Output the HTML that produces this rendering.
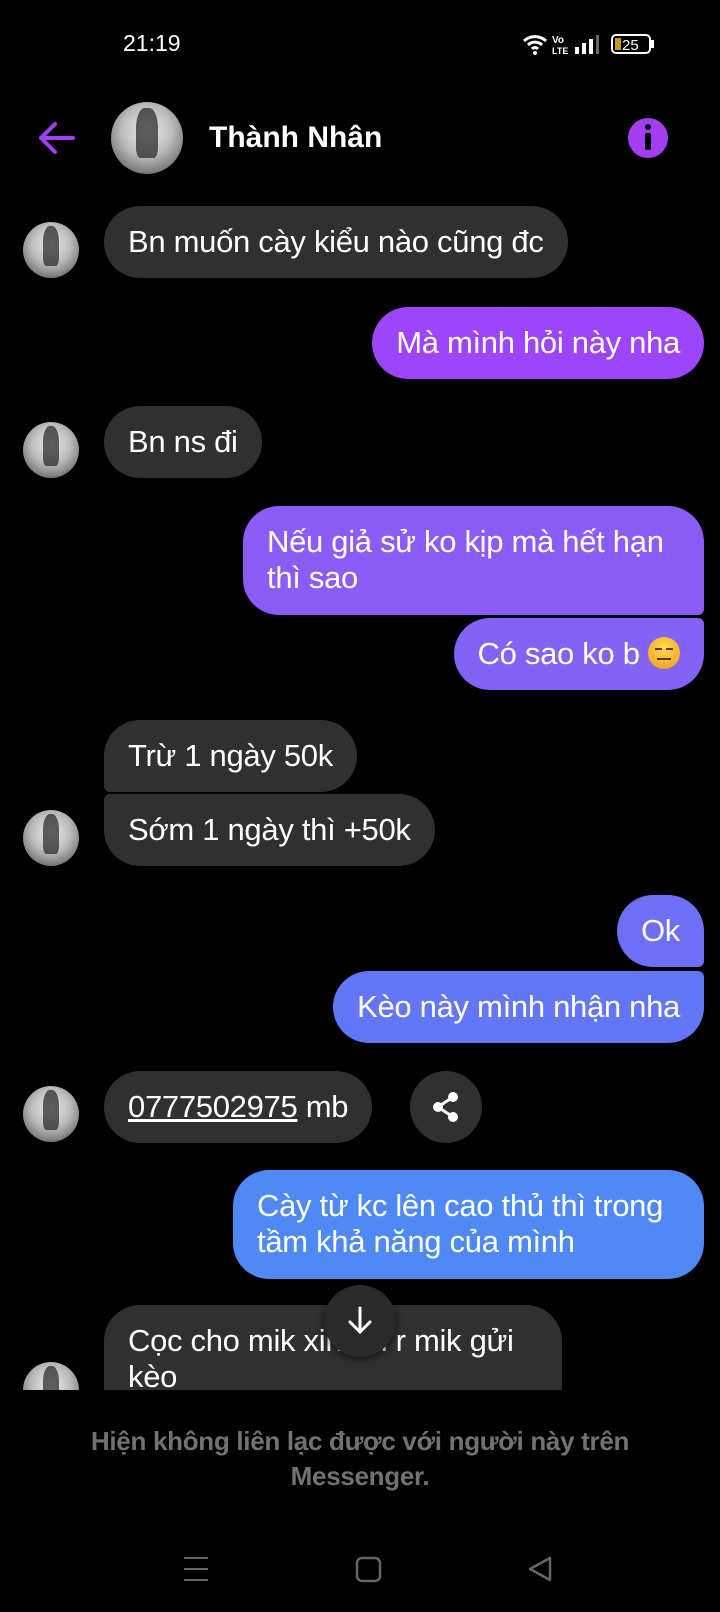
<!DOCTYPE html>
<html><head><meta charset="utf-8"><style>
*{margin:0;padding:0;box-sizing:border-box}
body{width:720px;height:1612px;background:#000;position:relative;overflow:hidden;font-family:"Liberation Sans","DejaVu Sans",sans-serif;color:#fff}
.a{position:absolute}
.b{position:absolute;font-size:31px;line-height:36px;padding:18px 24px;border-radius:36px;white-space:nowrap;letter-spacing:-0.3px}
.in{background:#303030;left:104px}
.out{right:16px}
.av{position:absolute;left:23px;width:56px;height:56px;border-radius:50%;background:radial-gradient(circle at 50% 40%,#eee 0,#bbb 45%,#444 100%);overflow:hidden}
.av:after{content:"";position:absolute;left:35%;top:8%;width:30%;height:70%;background:#222;border-radius:40% 40% 20% 20%;opacity:.7}
</style></head><body>
<div class="a" style="left:123px;top:30px;font-size:23px">21:19</div>
<svg class="a" style="left:522px;top:32px" width="150" height="24" viewBox="0 0 150 24">
<path d="M2 9a16 16 0 0 1 22 0M6 13a10 10 0 0 1 14 0M10 17a4 4 0 0 1 6 0" stroke="#fff" stroke-width="3" fill="none"/><circle cx="13" cy="21" r="2" fill="#fff"/>
<text x="30" y="11" font-size="10" fill="#fff" font-weight="bold">Vo</text><text x="30" y="22" font-size="9" fill="#fff" font-weight="bold">LTE</text>
<rect x="53" y="15" width="4" height="7" fill="#fff"/><rect x="60" y="11" width="4" height="11" fill="#fff"/><rect x="67" y="7" width="4" height="15" fill="#fff"/><rect x="74" y="3" width="3" height="19" fill="#666"/>
<rect x="90" y="3" width="38" height="18" rx="4" fill="none" stroke="#fff" stroke-width="2"/><rect x="93" y="6" width="6" height="12" fill="#c8961e"/><rect x="129" y="8" width="3" height="8" fill="#fff"/>
<text x="100" y="18" font-size="15" fill="#fff">25</text></svg>
<svg class="a" style="left:36px;top:120px" width="40" height="36" viewBox="0 0 40 36"><path d="M37 18H5M19 4 5 18l14 14" stroke="#a33ef5" stroke-width="4" fill="none" stroke-linecap="round" stroke-linejoin="round"/></svg>
<div class="av" style="left:111px;top:102px;width:72px;height:72px"></div>
<div class="a" style="left:209px;top:121px;font-size:30px;font-weight:bold">Thành Nhân</div>
<div class="a" style="left:628px;top:118px;width:40px;height:40px;border-radius:50%;background:#a33ef5"></div>
<div class="a" style="left:645px;top:124px;width:6px;height:6px;border-radius:50%;background:#000"></div>
<div class="a" style="left:645px;top:133px;width:6px;height:17px;border-radius:2px;background:#000"></div>

<div class="av" style="top:222px"></div>
<div class="b in" style="top:206px">Bn muốn cày kiểu nào cũng đc</div>
<div class="b out" style="top:307px;background:#9d45fb">Mà mình hỏi này nha</div>
<div class="av" style="top:422px"></div>
<div class="b in" style="top:406px">Bn ns đi</div>
<div class="b out" style="top:506px;background:#8b5cf7;border-radius:36px 36px 6px 36px;width:461px;padding-bottom:19px">Nếu giả sử ko kịp mà hết hạn<br>thì sao</div>
<div class="b out" style="top:618px;background:#8263f6;border-radius:36px 6px 36px 36px">Có sao ko b <span style="display:inline-block;position:relative;width:32px;height:32px;border-radius:50%;background:radial-gradient(circle at 50% 35%,#ffd84a,#f29a1e);vertical-align:-5px"><i style="position:absolute;left:7px;top:11px;width:7px;height:2px;background:#5a3a10"></i><i style="position:absolute;left:18px;top:11px;width:7px;height:2px;background:#5a3a10"></i><i style="position:absolute;left:9px;top:21px;width:14px;height:2px;background:#5a3a10"></i></span></div>
<div class="b in" style="top:720px;border-radius:36px 36px 36px 6px">Trừ 1 ngày 50k</div>
<div class="av" style="top:810px"></div>
<div class="b in" style="top:794px;border-radius:6px 36px 36px 36px">Sớm 1 ngày thì +50k</div>
<div class="b out" style="top:895px;background:#6d6ff6;border-radius:36px 36px 6px 36px">Ok</div>
<div class="b out" style="top:971px;background:#6376f5;border-radius:36px 6px 36px 36px">Kèo này mình nhận nha</div>
<div class="av" style="top:1086px"></div>
<div class="b in" style="top:1071px"><u>0777502975</u> mb</div>
<div class="a" style="left:410px;top:1071px;width:72px;height:72px;border-radius:50%;background:#303030"></div>
<svg class="a" style="left:428px;top:1089px" width="36" height="36" viewBox="0 0 36 36"><circle cx="25" cy="8" r="5" fill="#fff"/><circle cx="10" cy="18" r="5" fill="#fff"/><circle cx="25" cy="28" r="5" fill="#fff"/><path d="M25 8 10 18l15 10" stroke="#fff" stroke-width="3" fill="none"/></svg>
<div class="b out" style="top:1170px;background:#4f89f5;width:471px;padding-bottom:19px">Cày từ kc lên cao thủ thì trong<br>tầm khả năng của mình</div>
<div class="a" style="left:0;top:1290px;width:720px;height:100px;overflow:hidden">
<div class="av" style="top:72px"></div>
<div class="b in" style="top:15px;width:458px;height:120px;border-radius:36px">Cọc cho mik xin bill r mik gửi<br>kèo</div>
</div>
<div class="a" style="left:324px;top:1285px;width:72px;height:72px;border-radius:50%;background:#2a2a2a;box-shadow:0 2px 8px rgba(0,0,0,.6)"></div>
<svg class="a" style="left:345px;top:1305px" width="30" height="32" viewBox="0 0 30 32"><path d="M15 3v24M5 17l10 10 10-10" stroke="#fff" stroke-width="3" fill="none" stroke-linecap="round"/></svg>
<div class="a" style="left:0;top:1424px;width:720px;text-align:center;font-size:26px;line-height:35px;font-weight:bold;color:#727272;letter-spacing:-0.3px">Hiện không liên lạc được với người này trên<br>Messenger.</div>
<svg class="a" style="left:0;top:1550px" width="720" height="40" viewBox="0 0 720 40"><path d="M184 8h24M184 19h24M184 30h24" stroke="#666" stroke-width="2"/><rect x="357" y="8" width="23" height="23" rx="5" fill="none" stroke="#666" stroke-width="2.5"/><path d="M550 8 530 19l20 11z" fill="none" stroke="#666" stroke-width="2.5" stroke-linejoin="round"/></svg>
</body></html>
